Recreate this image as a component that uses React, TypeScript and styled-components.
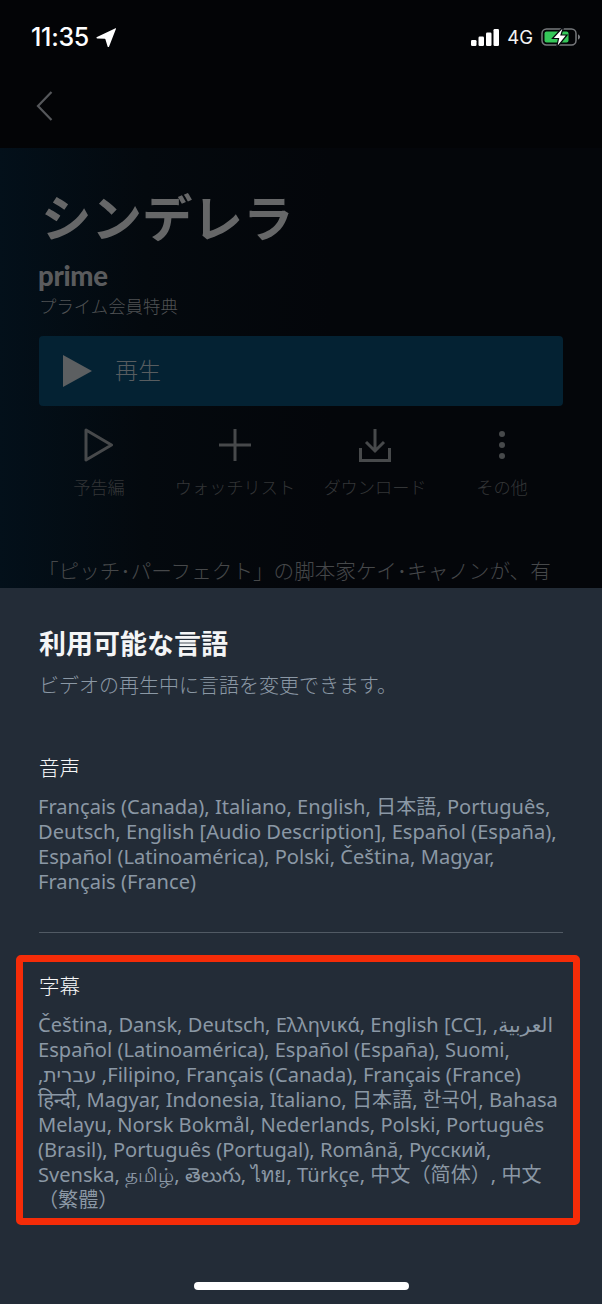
import { createGlobalStyle } from "styled-components";
import styled from "styled-components";

const JP = `"Noto Sans CJK JP", "Noto Sans", sans-serif`;
const BODY = `"Noto Sans", "Noto Sans CJK JP", "DejaVu Sans", sans-serif`;

const Global = createGlobalStyle`
  html, body {
    margin: 0;
    padding: 0;
    background: #232c37;
  }
`;

const Page = styled.div`
  width: 602px;
  height: 1304px;
  display: flex;
  flex-direction: column;
  overflow: hidden;
  font-family: ${JP};
`;

const Backdrop = styled.div`
  height: 588px;
  flex-shrink: 0;
  overflow: hidden;
  background: #04060a;
`;

const Header = styled.div`
  height: 148px;
  background: #030406;
  display: flex;
  flex-direction: column;
`;

const StatusBar = styled.div`
  height: 74px;
  display: flex;
  align-items: center;
  justify-content: space-between;
  padding: 0 22px 0 31px;
`;

const TimeGroup = styled.div`
  display: flex;
  align-items: center;
  gap: 7px;
`;

const Time = styled.span`
  font-family: Inter, sans-serif;
  font-size: 25px;
  font-weight: 500;
  color: #fff;
  letter-spacing: -0.3px;
`;

const StatusGroup = styled.div`
  display: flex;
  align-items: center;
  gap: 8px;
`;

const Network = styled.span`
  font-family: Inter, sans-serif;
  font-size: 18.5px;
  color: #f2f2f2;
`;

const BackRow = styled.div`
  padding: 16px 0 0 36px;
  line-height: 0;
`;

const Hero = styled.div`
  height: 440px;
  padding: 36px 39px 0;
  box-sizing: border-box;
  background: linear-gradient(90deg, #03101a 0%, #04090e 24%, #04060a 55%);
`;

const Title = styled.h1`
  margin: 0 0 0 2px;
  font-size: 50.5px;
  line-height: 62px;
  font-weight: 700;
  color: #666768;
`;

const Prime = styled.div`
  font-family: Lato, sans-serif;
  font-weight: 900;
  font-size: 27.5px;
  line-height: 28px;
  color: #5a5b5d;
  margin: 16px 0 0 -1px;
  letter-spacing: -0.3px;
`;

const Benefit = styled.div`
  font-size: 17.4px;
  line-height: 26px;
  margin-top: 3px;
  color: #505254;
  font-weight: 300;
`;

const PlayButton = styled.div`
  height: 70px;
  margin-top: 17px;
  border-radius: 4px;
  background: #042233;
  display: flex;
  align-items: center;
  gap: 23px;
  padding-left: 24px;
  font-size: 23px;
  color: #585d60;
  font-weight: 300;
`;

const PlayLabel = styled.span`
  margin-bottom: 4px;
`;

const Actions = styled.div`
  display: grid;
  grid-template-columns: 120px 152px 128px 126px;
  margin: 22px 0 0;
`;

const Action = styled.div`
  display: flex;
  flex-direction: column;
  align-items: center;
  gap: 12px;
  font-size: 17.2px;
  line-height: 26px;
  font-weight: 300;
  color: #333537;
  white-space: nowrap;
`;

const Synopsis = styled.p`
  margin: 55px 0 0 -1px;
  font-size: 20.6px;
  line-height: 30px;
  font-weight: 300;
  color: #46484a;
  white-space: nowrap;
`;

const Sheet = styled.div`
  flex: 1;
  display: flex;
  flex-direction: column;
  background: #232c37;
  padding: 37px 22px 0 16px;
`;

const Intro = styled.div`
  padding-left: 23px;
`;

const SheetTitle = styled.h2`
  margin: 0;
  font-size: 27px;
  line-height: 36px;
  font-weight: 700;
  color: #f4f5f6;
`;

const SheetNote = styled.p`
  margin: 9px 0 0;
  font-size: 20px;
  line-height: 30px;
  font-weight: 300;
  color: #8b98a5;
`;

const AudioBlock = styled.section`
  margin: 0 0 0 23px;
  width: 524px;
  padding: 52px 0 38px;
  border-bottom: 1px solid #515a64;
`;

const BlockLabel = styled.h3`
  margin: 0 0 12px;
  font-size: 20.5px;
  line-height: 30px;
  font-weight: 300;
  color: #f6f7f8;
`;

const LangLine = styled.div`
  font-family: ${BODY};
  font-size: 20.1px;
  line-height: 25px;
  margin-left: -1px;
  color: #8b98a5;
  white-space: nowrap;
`;

const Highlight = styled.section`
  margin-top: 22px;
  width: 564px;
  height: 270px;
  box-sizing: border-box;
  border: 7px solid #f52c08;
  border-radius: 5px;
  padding: 8px 16px 0;
`;

const Grabber = styled.div`
  width: 215px;
  height: 8px;
  border-radius: 4px;
  background: #fff;
  margin: 57px 0 0 178px;
`;

const audio = [
  "Français (Canada), Italiano, English, 日本語, Português,",
  "Deutsch, English [Audio Description], Español (España),",
  "Español (Latinoamérica), Polski, Čeština, Magyar,",
  "Français (France)",
];

const subtitles = [
  "Čeština, Dansk, Deutsch, Ελληνικά, English [CC], ,العربية",
  "Español (Latinoamérica), Español (España), Suomi,",
  ",עברית ,Filipino, Français (Canada), Français (France)",
  "हिन्दी, Magyar, Indonesia, Italiano, 日本語, 한국어, Bahasa",
  "Melayu, Norsk Bokmål, Nederlands, Polski, Português",
  "(Brasil), Português (Portugal), Română, Русский,",
  "Svenska, தமிழ், తెలుగు, ไทย, Türkçe, 中文（简体）, 中文",
  "（繁體）",
];

function StatusIcons() {
  return (
    <StatusGroup>
      <svg width="28" height="17" viewBox="0 0 28 17">
        <rect x="0" y="11" width="5.5" height="6" rx="1.200" fill="#fff" />
        <rect x="7.500" y="7.500" width="5.500" height="9.500" rx="1.200" fill="#fff" />
        <rect x="15" y="3.500" width="5.500" height="13.500" rx="1.200" fill="#fff" />
        <rect x="22.500" y="0" width="5.500" height="17" rx="1.200" fill="#fff" />
      </svg>
      <Network>4G</Network>
      <svg width="39" height="22" viewBox="0 0 39 22">
        <rect x="1" y="3" width="34" height="16" rx="4.500" fill="none" stroke="#77797c" strokeWidth="1.500" />
        <rect x="3.500" y="5.500" width="24" height="11" rx="2" fill="#35c759" />
        <path d="M37 8.500v5c1.200-.3 2-1.300 2-2.500s-.8-2.200-2-2.500z" fill="#77797c" />
        <path d="M23 0 11.500 12.500h6L15.500 22 26 9h-6z" fill="#fff" stroke="#04060a" strokeWidth="1.200" />
      </svg>
    </StatusGroup>
  );
}

export default function App() {
  return (
    <Page>
      <Global />
      <Backdrop>
        <Header>
          <StatusBar>
            <TimeGroup>
              <Time>11:35</Time>
              <svg width="20" height="19" viewBox="0 0 20 19">
                <path d="M19.500.3 1 9c-.9.400-.6 1.400.3 1.400l7.500.3c.3 0 .5.200.6.500l2.200 7.300c.2.800 1.200.9 1.500.1L20 .8c.1-.4-.1-.7-.5-.5z" fill="#fff" />
              </svg>
            </TimeGroup>
            <StatusIcons />
          </StatusBar>
          <BackRow>
            <svg width="18" height="32" viewBox="0 0 18 32">
              <path d="M15.500 2 2 16l13.500 14" fill="none" stroke="#55575a" strokeWidth="2.200" />
            </svg>
          </BackRow>
        </Header>
        <Hero>
          <Title>シンデレラ</Title>
          <Prime>prime</Prime>
          <Benefit>プライム会員特典</Benefit>
          <PlayButton>
            <svg width="29" height="32" viewBox="0 0 29 32">
              <path d="M0 0 29 16 0 32z" fill="#5c5f61" />
            </svg>
            <PlayLabel>再生</PlayLabel>
          </PlayButton>
          <Actions>
            <Action>
              <svg width="30" height="34" viewBox="0 0 30 34">
                <path d="M2 2 27.500 17 2 32z" fill="none" stroke="#47494b" strokeWidth="3" strokeLinejoin="round" />
              </svg>
              予告編
            </Action>
            <Action>
              <svg width="32" height="34" viewBox="0 0 32 34">
                <path d="M16 1v32M0 17h32" fill="none" stroke="#47494b" strokeWidth="3" />
              </svg>
              ウォッチリスト
            </Action>
            <Action>
              <svg width="32" height="34" viewBox="0 0 32 34">
                <path d="M16 1v21M7 14l9 9 9-9M1.500 20v12.500h29V20" fill="none" stroke="#47494b" strokeWidth="3" />
              </svg>
              ダウンロード
            </Action>
            <Action>
              <svg width="8" height="34" viewBox="0 0 8 34">
                <circle cx="4" cy="6" r="3" fill="#47494b" />
                <circle cx="4" cy="17" r="3" fill="#47494b" />
                <circle cx="4" cy="28" r="3" fill="#47494b" />
              </svg>
              その他
            </Action>
          </Actions>
          <Synopsis>「ピッチ･パーフェクト」の脚本家ケイ･キャノンが、有</Synopsis>
        </Hero>
      </Backdrop>
      <Sheet>
        <Intro>
          <SheetTitle>利用可能な言語</SheetTitle>
          <SheetNote>ビデオの再生中に言語を変更できます。</SheetNote>
        </Intro>
        <AudioBlock>
          <BlockLabel>音声</BlockLabel>
          {audio.map((line) => (
            <LangLine key={line}>{line}</LangLine>
          ))}
        </AudioBlock>
        <Highlight>
          <BlockLabel>字幕</BlockLabel>
          {subtitles.map((line) => (
            <LangLine key={line}>{line}</LangLine>
          ))}
        </Highlight>
        <Grabber />
      </Sheet>
    </Page>
  );
}
